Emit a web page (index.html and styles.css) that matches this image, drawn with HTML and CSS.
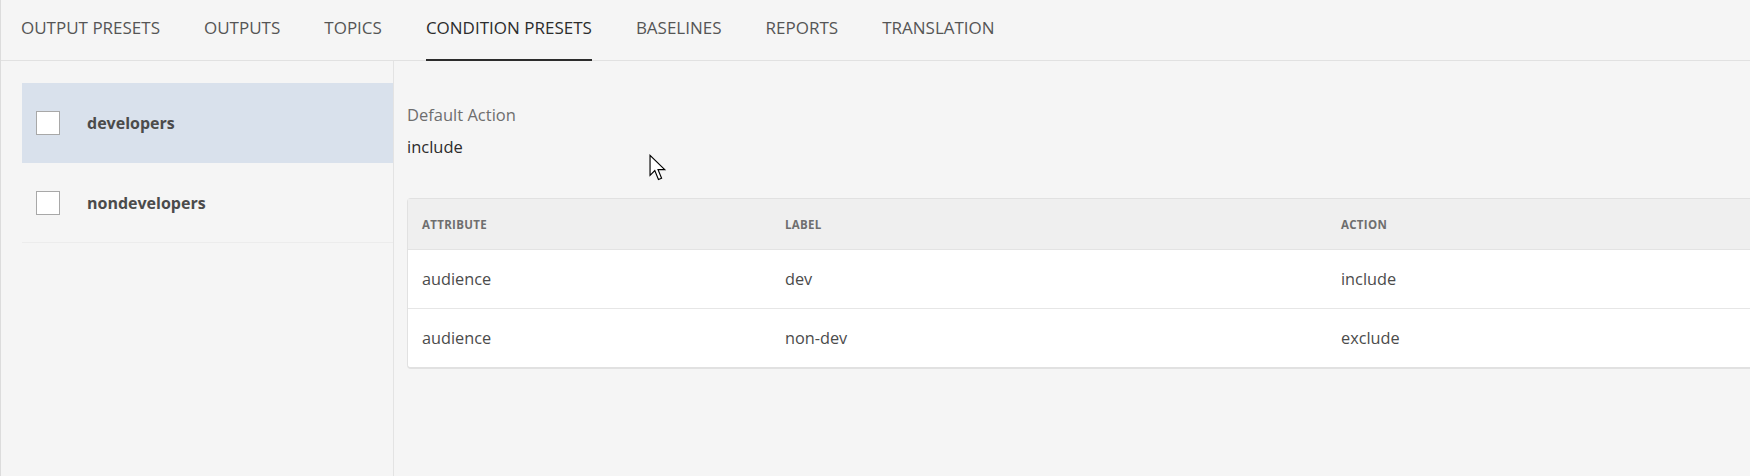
FILE: index.html
```html
<!DOCTYPE html>
<html lang="en">
<head>
    <meta charset="UTF-8">
    <title>Condition Presets</title>
    <link rel="stylesheet" href="styles.css">
</head>
<body>
    <div class="app">
        <nav class="tabs">
            <a class="tab">OUTPUT PRESETS</a>
            <a class="tab">OUTPUTS</a>
            <a class="tab">TOPICS</a>
            <a class="tab active">CONDITION PRESETS</a>
            <a class="tab">BASELINES</a>
            <a class="tab">REPORTS</a>
            <a class="tab">TRANSLATION</a>
        </nav>

        <div class="main">
            <aside class="preset-list">
                <div class="preset selected">
                    <span class="checkbox"></span>
                    <span class="preset-name">developers</span>
                </div>
                <div class="preset">
                    <span class="checkbox"></span>
                    <span class="preset-name">nondevelopers</span>
                </div>
            </aside>

            <section class="details">
                <div class="field-label">Default Action</div>
                <div class="field-value">include</div>

                <table class="conditions">
                    <thead>
                        <tr>
                            <th class="col-attr">ATTRIBUTE</th>
                            <th class="col-label">LABEL</th>
                            <th>ACTION</th>
                        </tr>
                    </thead>
                    <tbody>
                        <tr>
                            <td>audience</td>
                            <td>dev</td>
                            <td>include</td>
                        </tr>
                        <tr>
                            <td>audience</td>
                            <td>non-dev</td>
                            <td>exclude</td>
                        </tr>
                    </tbody>
                </table>

                <svg class="cursor" width="21" height="29" viewBox="0 0 20 27">
                    <path d="M1 1 L1 20 L5.5 15.5 L9 24 L12 22.8 L8.6 14.6 L15 14.6 Z" fill="#fff" stroke="#000" stroke-width="1.1" stroke-linejoin="miter"/>
                </svg>
            </section>
        </div>
    </div>
</body>
</html>
```

FILE: styles.css
```css
html, body {
    margin: 0;
    padding: 0;
}
body {
    font-family: "Open Sans", Arial, sans-serif;
    background-color: #f5f5f5;
    color: #4b4b4b;
}
.app {
    height: 476px;
    border-left: 1px solid #dcdcdc;
    display: flex;
    flex-direction: column;
    overflow: hidden;
}
.tabs {
    display: flex;
    gap: 44px;
    padding-left: 20px;
    height: 60px;
    border-bottom: 1px solid #e1e1e1;
    flex-shrink: 0;
}
.tab {
    position: relative;
    font-size: 17px;
    line-height: 22px;
    padding-top: 17px;
    color: #555;
    cursor: pointer;
}
.tab.active {
    color: #2c2c2c;
}
.tab.active::after {
    content: "";
    position: absolute;
    left: 0;
    right: 0;
    bottom: -1px;
    height: 2px;
    background-color: #2c2c2c;
}
.main {
    display: flex;
    flex: 1;
}
.preset-list {
    width: 371px;
    padding: 22px 0 0 21px;
    border-right: 1px solid #e3e3e3;
    flex-shrink: 0;
}
.preset {
    display: flex;
    align-items: center;
    height: 79px;
    padding-left: 14px;
    border-bottom: 1px solid #ececec;
}
.preset.selected {
    background-color: #d9e1ec;
    border-bottom-color: transparent;
}
.checkbox {
    width: 22px;
    height: 22px;
    border: 1px solid #a8a8a8;
    background-color: #fff;
    box-sizing: content-box;
}
.preset-name {
    margin-left: 27px;
    font-size: 16px;
    font-weight: bold;
    color: #4b4b4b;
}
.details {
    position: relative;
    flex: 1;
    padding: 43px 0 0 13px;
}
.field-label {
    font-size: 16.5px;
    line-height: 22px;
    color: #6e6e6e;
}
.field-value {
    margin-top: 10px;
    font-size: 16.5px;
    line-height: 22px;
    color: #2c2c2c;
}
.conditions {
    margin-top: 40px;
    width: 1400px;
    border-collapse: separate;
    border-spacing: 0;
    border: 1px solid #e1e1e1;
    border-bottom-width: 2px;
    border-radius: 4px;
    background-color: #fff;
}
.conditions th {
    height: 50px;
    text-align: left;
    padding: 0 0 0 14px;
    font-size: 11.5px;
    font-weight: bold;
    letter-spacing: 0.3px;
    color: #6e6e6e;
    background-color: #efefef;
    border-bottom: 1px solid #e3e3e3;
}
.conditions td {
    height: 58px;
    padding: 0 0 0 14px;
    font-size: 16.3px;
    color: #4b4b4b;
}
.conditions tbody tr + tr td {
    border-top: 1px solid #e6e6e6;
}
.col-attr {
    width: 349px;
}
.col-label {
    width: 542px;
}
.cursor {
    position: absolute;
    left: 255px;
    top: 93px;
}
```
